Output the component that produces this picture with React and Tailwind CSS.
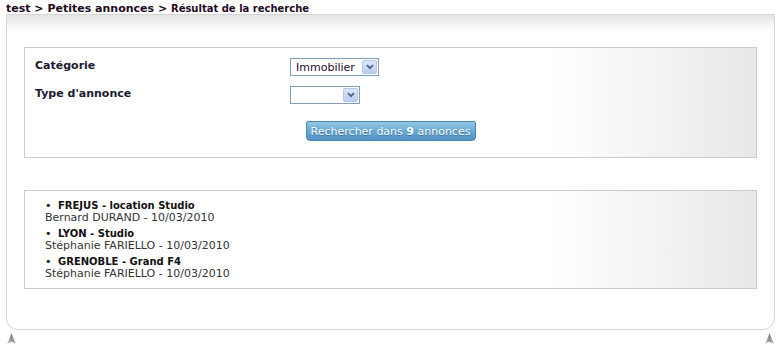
import React from "react";

const annonces = [
  { title: "FREJUS - location Studio", author: "Bernard DURAND", date: "10/03/2010" },
  { title: "LYON - Studio", author: "Stéphanie FARIELLO", date: "10/03/2010" },
  { title: "GRENOBLE - Grand F4", author: "Stéphanie FARIELLO", date: "10/03/2010" },
];

function SelectBox({ value, width }) {
  return (
    <div
      className={`flex h-[18px] items-center justify-between border border-[#7f9db9] bg-white pl-[5px] pr-[1px] ${width}`}
    >
      <span className="text-[11px] leading-none text-[#2a0a2a]">{value}</span>
      <span className="flex h-[14px] w-[15px] items-center justify-center rounded-[2px] border border-[#b4c6ea] bg-[linear-gradient(to_bottom,#dde7fb,#b9cdf4)]">
        <svg width="8" height="6" viewBox="0 0 8 6">
          <path d="M1 1.2 L4 4.2 L7 1.2" fill="none" stroke="#4d6185" strokeWidth="1.8" />
        </svg>
      </span>
    </div>
  );
}

function Arrow() {
  return (
    <svg width="9" height="11" viewBox="0 0 9 11">
      <defs>
        <linearGradient id="arr" x1="0" x2="1" y1="0" y2="0">
          <stop offset="0" stopColor="#d8d8d8" />
          <stop offset="0.5" stopColor="#8a8a8a" />
          <stop offset="1" stopColor="#c8c8c8" />
        </linearGradient>
      </defs>
      <polygon points="4.5,0 9,11 4.5,8.5 0,11" fill="url(#arr)" />
    </svg>
  );
}

export default function App() {
  return (
    <div className="min-h-[350px] w-[781px] bg-white font-['DejaVu_Sans',Verdana,sans-serif]">
      <div className="h-[14px] pl-[6px] leading-[14px] text-[#220a22]">
        <span className="text-[11px] font-bold">test &gt; Petites annonces &gt; </span>
        <span className="text-[10px] font-bold">Résultat de la recherche</span>
      </div>

      <div className="mx-[6px] rounded-b-[12px] border border-[#d6d6d6] bg-[linear-gradient(to_bottom,#e4e4e4,#ffffff_16px)] px-[17px] pt-[32px] pb-[40px]">
        <div className="border border-[#cccccc] bg-[linear-gradient(to_right,#ffffff_72%,#e8e8e8)] pt-[10px] pb-[16px] pl-[10px]">
          <div className="grid grid-cols-[255px_1fr] gap-y-[10px]">
            <div className="pt-[1px] text-[11px] font-bold leading-[14px] text-[#1c1a30]">Catégorie</div>
            <SelectBox value="Immobilier" width="w-[89px]" />
            <div className="pt-[1px] text-[11px] font-bold leading-[14px] text-[#1c1a30]">Type d'annonce</div>
            <SelectBox value="" width="w-[70px]" />
          </div>
          <div className="mt-[17px] flex justify-center pr-[10px]">
            <button className="h-[20px] w-[170px] rounded-b-[4px] rounded-t-[2px] border border-[#4b86b2] bg-[linear-gradient(to_bottom,#93c6e3,#6aaad4_50%,#4f93c4)] text-[11px] leading-none text-white [text-shadow:0_1px_1px_#3a6f99]">
              Rechercher dans <b>9</b> annonces
            </button>
          </div>
        </div>

        <div className="mt-[32px] border border-[#cccccc] bg-[linear-gradient(to_right,#ffffff_72%,#e8e8e8)] pt-[9px] pb-[8px] pl-[20px]">
          {annonces.map((a, i) => (
            <div key={i} className={i < annonces.length - 1 ? "mb-[4px]" : ""}>
              <div className="flex h-[12px] items-center text-[10px] font-bold leading-[12px] text-[#111111]">
                <span className="w-[13px] text-[11px] font-normal leading-[12px]">•</span>
                <span>{a.title}</span>
              </div>
              <div className="text-[11px] leading-[12px] text-[#333333]">
                {a.author} - {a.date}
              </div>
            </div>
          ))}
        </div>
      </div>

      <div className="flex justify-between px-[7px] pt-[3px]">
        <Arrow />
        <Arrow />
      </div>
    </div>
  );
}
